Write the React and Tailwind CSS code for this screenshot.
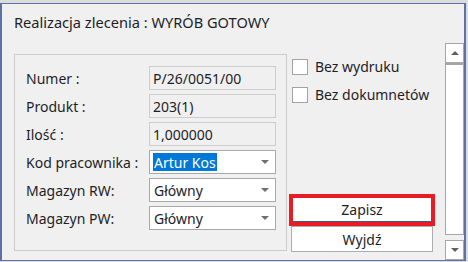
export default function App() {
  const font = { fontFamily: '"Noto Sans", "Open Sans", sans-serif' };
  const Field = ({ label, value }) => (
    <div className="flex items-center h-[24px]">
      <div className="w-[123px] text-[14px] text-[#1e1e28]">{label}</div>
      <div className="w-[127px] h-[24px] border border-[#cdcdcd] bg-[#f0f0f0] flex items-center pl-[3px] text-[14px] text-[#1e1e28]">
        {value}
      </div>
    </div>
  );
  const Combo = ({ label, value, selected }) => (
    <div className="flex items-center h-[24px]">
      <div className="w-[123px] text-[14px] text-[#1e1e28]">{label}</div>
      <div className="w-[127px] h-[24px] border border-[#a9a9a9] bg-white flex items-center pl-[3px] pr-[6px] text-[14px] text-[#1e1e28]">
        <span
          className={
            selected
              ? "bg-[#0078d7] text-white px-[1px] h-[18px] flex items-center"
              : "px-[1px]"
          }
        >
          {value}
        </span>
        <span className="ml-auto w-0 h-0 border-l-[4px] border-r-[4px] border-t-[4px] border-l-transparent border-r-transparent border-t-[#6e6e6e]" />
      </div>
    </div>
  );
  const Check = ({ label }) => (
    <div className="flex items-center h-[17px] gap-[7px]">
      <div className="w-[16px] h-[16px] border border-[#a3a3a3] bg-white" />
      <span className="text-[14px] text-[#1e1e28]">{label}</span>
    </div>
  );
  return (
    <div className="w-[468px] h-[262px] bg-[#dcdcdc] pt-[3px]" style={font}>
      <div className="w-[466px] h-[258px] border-l-2 border-t border-r-2 border-b border-[#5b73a3] bg-[#f0f0f0] flex">
        {/* left column */}
        <div className="flex flex-col pl-[12px]">
          <div className="mt-[8px] h-[20px] text-[14.6px] leading-[20px] text-[#1e1e28] whitespace-nowrap">
            Realizacja zlecenia : WYRÓB GOTOWY
          </div>
          <div className="mt-[22px] w-[273px] h-[197px] border border-[#cccccc] pl-[11px] pt-[11px] flex flex-col gap-[4px]">
            <Field label="Numer :" value="P/26/0051/00" />
            <Field label="Produkt :" value="203(1)" />
            <Field label="Ilość :" value="1,000000" />
            <Combo label="Kod pracownika :" value="Artur Kos" selected />
            <Combo label="Magazyn RW:" value="Główny" />
            <Combo label="Magazyn PW:" value="Główny" />
          </div>
        </div>
        {/* middle column */}
        <div className="flex flex-col ml-[2px] w-[146px]">
          <div className="mt-[54px] ml-[3px] flex flex-col gap-[11px]">
            <Check label="Bez wydruku" />
            <Check label="Bez dokumnetów" />
          </div>
          <div className="mt-[91px] w-[146px] h-[32px] border-4 border-[#e81c25] bg-white flex flex-col">
            <div className="flex-1 flex items-center justify-center text-[14px] text-[#1e1e28]">Zapisz</div>
            <div className="h-[1px] bg-[#3d5a8a]" />
          </div>
          <div className="ml-[2px] w-[142px] h-[26px] border border-[#adadad] bg-white flex items-center justify-center text-[14px] text-[#1e1e28]">
            Wyjdź
          </div>
        </div>
        {/* scrollbar */}
        <div className="ml-[10px] mt-[39px] w-[19px] h-[217px] flex flex-col">
          <div className="h-[20px] border border-[#a6a6a6] bg-white flex items-center justify-center">
            <span className="w-0 h-0 border-l-[4px] border-r-[4px] border-b-[4px] border-l-transparent border-r-transparent border-b-[#606060]" />
          </div>
          <div className="flex-1 border-x border-b border-t-2 border-[#a6a6a6] bg-white" />
          <div className="mt-[5px] h-[20px] border border-[#a6a6a6] bg-white flex items-center justify-center">
            <span className="w-0 h-0 border-l-[4px] border-r-[4px] border-t-[4px] border-l-transparent border-r-transparent border-t-[#606060]" />
          </div>
        </div>
      </div>
    </div>
  );
}
